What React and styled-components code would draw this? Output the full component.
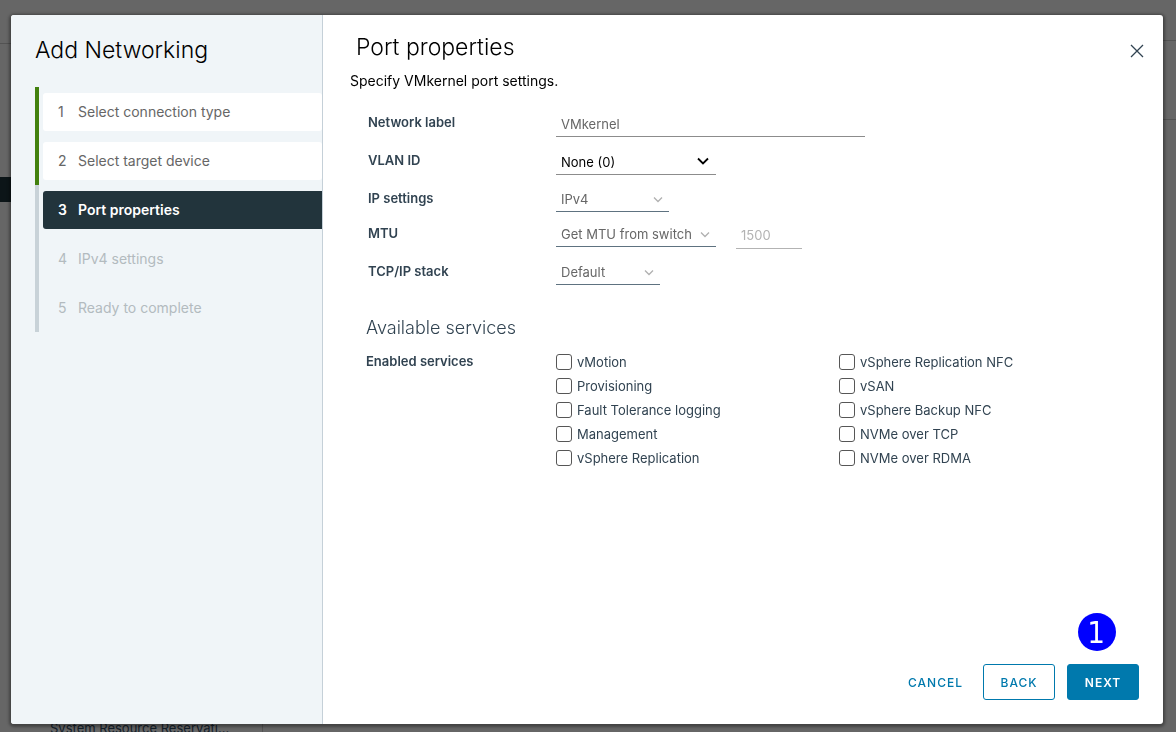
import React from "react";
import styled, { createGlobalStyle, css } from "styled-components";

const GlobalStyle = createGlobalStyle`
  *, *::before, *::after { box-sizing: border-box; }
  html, body, #root { height: 100%; }
  body {
    margin: 0;
    background: #666;
    font-family: Inter, "Liberation Sans", sans-serif;
    font-size: 13px;
    line-height: 20px;
    color: #314351;
  }
  h1, h2, h3, p, ol, fieldset { margin: 0; padding: 0; border: 0; }
  ol { list-style: none; }
  button, input, select { font: inherit; }
`;

/* Dimmed application behind the dialog */
const Workspace = styled.div`
  height: 100vh;
  overflow: hidden;
  display: flex;
  background: #666;
`;

const TreePane = styled.div`
  width: 263px;
  flex: none;
  display: flex;
  flex-direction: column;
`;

const TreeHeader = styled.div`
  height: 44px;
  flex: none;
  border-bottom: 1px solid #535353;
`;

const TreeSelection = styled.div`
  height: 25px;
  flex: none;
  margin-top: 133px;
  background: #0c1518;
`;

const TreeItem = styled.div`
  margin-top: auto;
  height: 14px;
  padding-left: 50px;
  border-right: 1px solid #535353;
  color: #14202a;
`;

const PageArea = styled.div`
  flex: 1;
`;

const PageBand = styled.div`
  height: ${(p) => p.$height}px;
  border-bottom: 1px solid #535353;
`;

const Overlay = styled.div`
  position: fixed;
  inset: 0;
  display: flex;
  padding: 15px 13px 8px 11px;
`;

const Dialog = styled.div`
  flex: 1;
  display: flex;
  background: #fff;
  border-radius: 3px;
  overflow: hidden;
  box-shadow: 0 1px 3px 2px rgba(0, 0, 0, 0.35);
`;

const Sidebar = styled.nav`
  width: 312px;
  flex: none;
  padding: 20px 0 24px 24px;
  background: #f0f5f8;
  border-right: 1px solid #c5d0d8;
`;

const WizardTitle = styled.h1`
  font-size: 23px;
  line-height: 30px;
  font-weight: 300;
  color: #000;
  margin-bottom: 22px;
`;

const Step = styled.li`
  padding: 6px 0 5px 4px;
  border-left: 4px solid ${(p) => (p.$state === "done" ? "#42810e" : "#c8d2d8")};
`;

const stepLook = {
  done: css`background: #fff; color: #666;`,
  current: css`background: #22343c; color: #fff; font-weight: 600; border-radius: 3px 0 0 3px;`,
  pending: css`background: transparent; color: #b3bbbf;`,
};

const StepButton = styled.button`
  display: flex;
  align-items: center;
  width: 100%;
  height: 38px;
  padding: 0 0 0 15px;
  border: 0;
  border-radius: 3px;
  font-size: 14px;
  text-align: left;
  ${(p) => stepLook[p.$state]}
`;

const StepNumber = styled.span`
  width: 20px;
`;

const Content = styled.main`
  position: relative;
  flex: 1;
  display: flex;
  flex-direction: column;
  padding: 20px 24px 24px 27px;
`;

const CloseButton = styled.button`
  position: absolute;
  top: 24px;
  right: 14px;
  width: 24px;
  height: 24px;
  padding: 0;
  border: 0;
  background: none;
  color: #314351;
  svg { display: block; }
`;

const PageTitle = styled.h2`
  padding-left: 6px;
  font-size: 23px;
  line-height: 24px;
  font-weight: 300;
  color: #000;
`;

const Description = styled.p`
  margin-top: 12px;
  margin-bottom: 22px;
  font-size: 14px;
  color: #000;
`;

const Form = styled.form`
  padding-left: 18px;
`;

const Row = styled.div`
  display: flex;
  align-items: flex-start;
  height: ${(p) => (p.$compact ? 35 : 38)}px;
`;

const RowLabel = styled.label`
  width: 188px;
  flex: none;
  line-height: 18px;
  font-weight: 600;
`;

const fieldLook = css`
  border: 0;
  border-bottom: 1px solid #8c8c8c;
  border-radius: 0;
  background: transparent;
  outline: none;
`;

const TextField = styled.input`
  ${fieldLook}
  width: ${(p) => p.$width}px;
  height: 24px;
  padding: 0 5px 2px;
  color: #666;
  &:disabled { height: 25px; color: #b3b3b3; border-color: #b3b3b3; }
`;

const SelectBox = styled.div`
  position: relative;
  width: ${(p) => p.$width}px;
  margin-right: 20px;
  svg {
    position: absolute;
    right: ${(p) => (p.$muted ? 4 : 6)}px;
    top: ${(p) => (p.$muted ? 6 : 5)}px;
    pointer-events: none;
  }
`;

const SelectField = styled.select`
  ${fieldLook}
  display: block;
  appearance: none;
  width: 100%;
  height: ${(p) => (p.$muted ? 23 : 24)}px;
  padding: 0 20px 2px 5px;
  color: ${(p) => (p.$muted ? "#666" : "#000")};
  border-color: ${(p) => (p.$muted ? "#5e7280" : "#8c8c8c")};
`;

const SectionTitle = styled.h3`
  margin: 16px 0 12px;
  padding-left: 16px;
  font-size: 18px;
  line-height: 24px;
  font-weight: 300;
`;

const Services = styled.fieldset`
  display: flex;
  min-width: 0;
  padding: 0 17px 0 16px;
`;

const ServicesLabel = styled.div`
  width: 190px;
  flex: none;
  line-height: 18px;
  font-weight: 600;
`;

const ServiceGrid = styled.div`
  flex: 1;
  display: grid;
  grid-template-columns: 1fr 1fr;
  grid-template-rows: repeat(5, 20px);
  grid-auto-flow: column;
  row-gap: 4px;
`;

const ServiceOption = styled.label`
  display: flex;
  align-items: center;
  gap: 5px;
  line-height: 18px;
`;

const Checkbox = styled.input`
  appearance: none;
  width: 16px;
  height: 16px;
  margin: 0;
  border: 1px solid #565656;
  border-radius: 3px;
  background: #fff;
  &:checked { background: #0079b0; border-color: #0079b0; }
`;

const Footer = styled.footer`
  display: flex;
  justify-content: flex-end;
  gap: 12px;
  margin-top: auto;
`;

const buttonLook = {
  link: css`border-color: transparent; background: transparent; color: #0079ad; padding: 2px 7px 0;`,
  outline: css`border-color: #0079ad; background: #fff; color: #0079ad; width: 72px;`,
  primary: css`border-color: #0079ad; background: #0079ad; color: #fff; width: 72px; font-weight: 600;`,
};

const ActionButton = styled.button`
  height: 36px;
  padding: 2px 0 0;
  border: 1px solid;
  border-radius: 3px;
  font-size: 12px;
  font-weight: 500;
  letter-spacing: 1px;
  ${(p) => buttonLook[p.$kind]}
`;

const Callout = styled.span`
  position: absolute;
  right: 47px;
  bottom: 73px;
  width: 38px;
  height: 38px;
  padding-right: 2px;
  border-radius: 50%;
  background: #00f;
  color: #fff;
  font-family: "DejaVu Sans Condensed", "DejaVu Sans", sans-serif;
  font-size: 31px;
  line-height: 38px;
  text-align: center;
`;

const steps = [
  ["Select connection type", "done"],
  ["Select target device", "done"],
  ["Port properties", "current"],
  ["IPv4 settings", "pending"],
  ["Ready to complete", "pending"],
];

const services = [
  "vMotion",
  "Provisioning",
  "Fault Tolerance logging",
  "Management",
  "vSphere Replication",
  "vSphere Replication NFC",
  "vSAN",
  "vSphere Backup NFC",
  "NVMe over TCP",
  "NVMe over RDMA",
];

function Chevron({ muted }) {
  return (
    <svg width="14" height="10" viewBox="0 0 14 10" fill="none" aria-hidden="true">
      {muted ? (
        <path d="M3 2.5 L7 6.5 L11 2.5" stroke="#b0b0b0" strokeWidth="1.3" />
      ) : (
        <path d="M2 2.5 L7 7.5 L12 2.5" stroke="#000" strokeWidth="1.8" />
      )}
    </svg>
  );
}

function Select({ id, width, value, muted }) {
  return (
    <SelectBox $width={width} $muted={muted}>
      <SelectField id={id} $muted={muted} defaultValue={value}>
        <option>{value}</option>
      </SelectField>
      <Chevron muted={muted} />
    </SelectBox>
  );
}

export default function App() {
  return (
    <>
      <GlobalStyle />
      <Workspace aria-hidden="true">
        <TreePane>
          <TreeHeader />
          <TreeSelection />
          <TreeItem>System Resource Reservati...</TreeItem>
        </TreePane>
        <PageArea>
          <PageBand $height={41} />
          <PageBand $height={79} />
        </PageArea>
      </Workspace>
      <Overlay>
        <Dialog role="dialog" aria-label="Add Networking">
          <Sidebar>
            <WizardTitle>Add Networking</WizardTitle>
            <ol>
              {steps.map(([name, state], i) => (
                <Step key={name} $state={state}>
                  <StepButton type="button" $state={state} disabled={state === "pending"}>
                    <StepNumber>{i + 1}</StepNumber>
                    {name}
                  </StepButton>
                </Step>
              ))}
            </ol>
          </Sidebar>
          <Content>
            <PageTitle>Port properties</PageTitle>
            <CloseButton type="button" aria-label="Close">
              <svg width="24" height="24" viewBox="0 0 24 24" fill="none" aria-hidden="true">
                <path d="M6 6 L18 18 M18 6 L6 18" stroke="currentColor" strokeWidth="1.3" />
              </svg>
            </CloseButton>
            <Description>Specify VMkernel port settings.</Description>
            <Form>
              <Row>
                <RowLabel htmlFor="network-label">Network label</RowLabel>
                <TextField id="network-label" $width={309} defaultValue="VMkernel" />
              </Row>
              <Row>
                <RowLabel htmlFor="vlan">VLAN ID</RowLabel>
                <Select id="vlan" width={160} value="None (0)" />
              </Row>
              <Row $compact>
                <RowLabel htmlFor="ip">IP settings</RowLabel>
                <Select id="ip" width={113} value="IPv4" muted />
              </Row>
              <Row>
                <RowLabel htmlFor="mtu">MTU</RowLabel>
                <Select id="mtu" width={160} value="Get MTU from switch" muted />
                <TextField aria-label="MTU value" $width={66} defaultValue="1500" disabled />
              </Row>
              <Row>
                <RowLabel htmlFor="stack">TCP/IP stack</RowLabel>
                <Select id="stack" width={104} value="Default" muted />
              </Row>
            </Form>
            <SectionTitle>Available services</SectionTitle>
            <Services aria-labelledby="enabled-services">
              <ServicesLabel id="enabled-services">Enabled services</ServicesLabel>
              <ServiceGrid>
                {services.map((name) => (
                  <ServiceOption key={name}>
                    <Checkbox type="checkbox" />
                    {name}
                  </ServiceOption>
                ))}
              </ServiceGrid>
            </Services>
            <Footer>
              <ActionButton type="button" $kind="link">CANCEL</ActionButton>
              <ActionButton type="button" $kind="outline">BACK</ActionButton>
              <ActionButton type="button" $kind="primary">NEXT</ActionButton>
            </Footer>
            <Callout>1</Callout>
          </Content>
        </Dialog>
      </Overlay>
    </>
  );
}
